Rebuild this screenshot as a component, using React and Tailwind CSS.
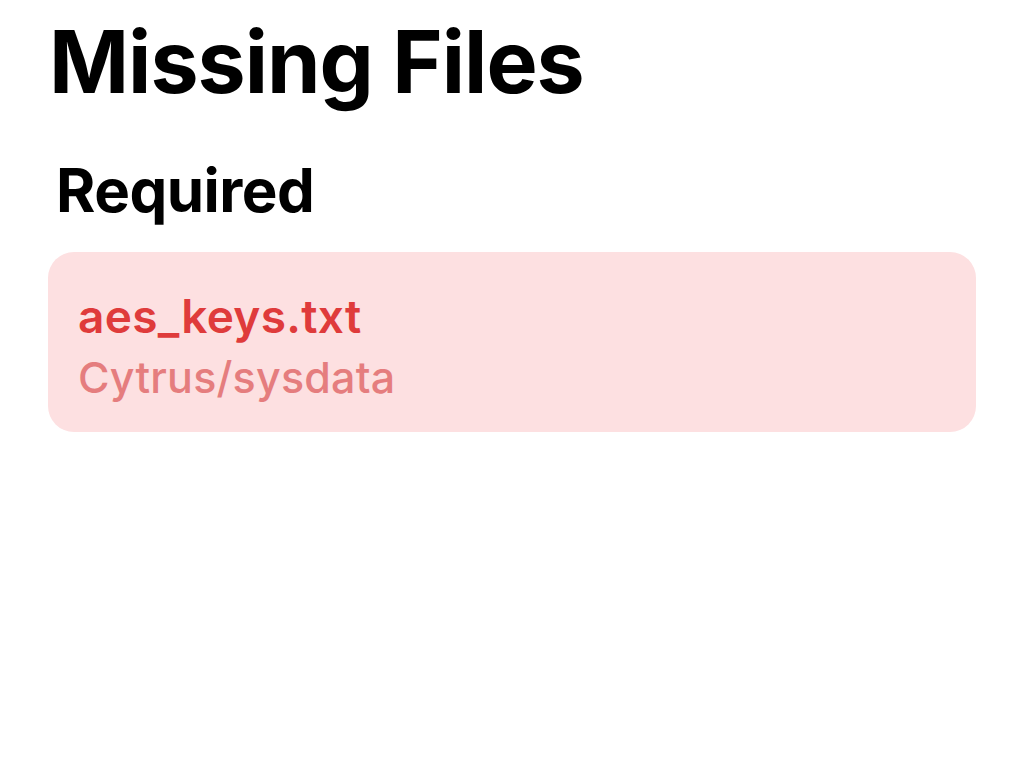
export default function App() {
  return (
    <div className="min-h-[764px] w-[1024px] bg-white font-['Inter',sans-serif]">
      <div className="px-12 pt-[14px]">
        <h1 className="pl-[1px] text-[86px] font-bold leading-[96px] tracking-[-1px] text-black">Missing Files</h1>
        <h2 className="mt-[50px] pl-2 text-[60px] font-bold leading-[60px] tracking-[-0.5px] text-black">Required</h2>
        <div className="mt-[32px] flex flex-col rounded-[26px] bg-[#fde0e1] px-[30px] pt-[38px] pb-[31px]">
          <div className="text-[46px] font-semibold leading-[52px] tracking-[0.3px] text-[#df3b3b]">aes_keys.txt</div>
          <div className="mt-[11px] text-[43px] font-medium leading-[48px] tracking-[0.2px] text-[#e57d7e]">Cytrus/sysdata</div>
        </div>
      </div>
    </div>
  );
}
